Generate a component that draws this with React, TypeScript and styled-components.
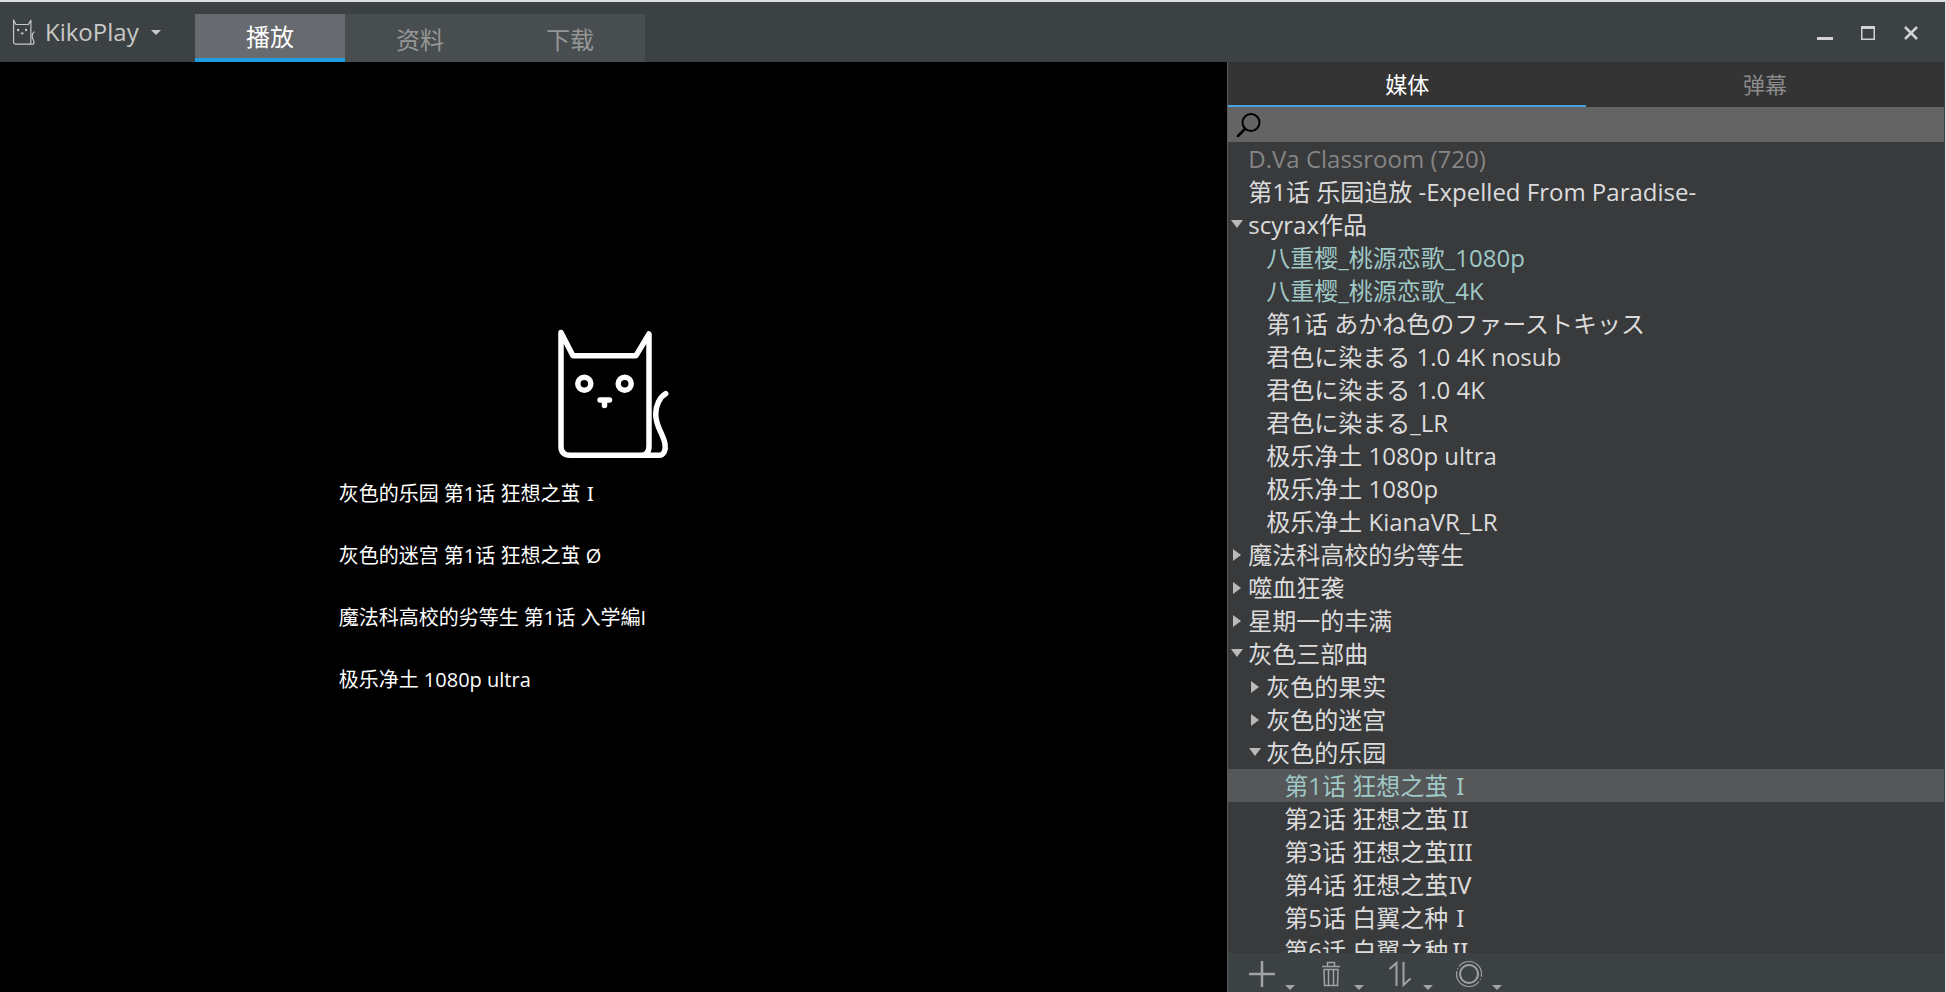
import React from 'react';
import styled, { createGlobalStyle } from 'styled-components';

const GlobalStyle = createGlobalStyle`
  *, *::before, *::after { box-sizing: border-box; }
  body { margin: 0; background: #000; }
  button { cursor: pointer; }
`;

const Window = styled.div`
  display: flex;
  flex-direction: column;
  height: 100vh;
  border-top: 2px solid #dcdfe1;
  border-right: 1px solid #dcdfe1;
  background: #000;
  color: #dcdcdc;
  font-family: "Open Sans", "Noto Sans CJK SC", sans-serif;
  font-size: 24px;
  font-weight: 400;
`;

const TitleBar = styled.header`
  display: flex;
  flex: none;
  height: 60px;
  background: #3c4143;
`;

const AppMenu = styled.button`
  display: flex;
  align-items: center;
  width: 195px;
  padding: 0 0 0 13px;
  border: 0;
  background: none;
  color: #c8c8c8;
  font: inherit;
  text-align: left;
`;

const AppName = styled.span`
  margin: 0 12px 0 10px;
  line-height: 32px;
`;

const PageTabs = styled.nav`
  display: flex;
  align-self: flex-end;
  height: 48px;
  background: #484d4f;
`;

const PageTab = styled.button<{ $active?: boolean }>`
  width: 150px;
  padding: ${(p) => (p.$active ? '2px 0 0' : '4px 0 0')};
  border: 0;
  border-bottom: ${(p) => (p.$active ? '4px solid #1f9de0' : '0')};
  background: ${(p) => (p.$active ? '#676a6e' : 'transparent')};
  color: ${(p) => (p.$active ? '#fff' : '#969696')};
  font: inherit;
  line-height: 42px;
`;

const WindowButtons = styled.div`
  display: flex;
  align-items: center;
  margin-left: auto;
  padding-right: 13px;
`;

const WindowButton = styled.button`
  display: grid;
  place-items: center;
  width: 43px;
  height: 40px;
  padding: 2px 0 0;
  border: 0;
  background: none;
  color: #d2d2d2;
`;

const Body = styled.main`
  display: flex;
  flex: 1;
  min-height: 0;
`;

const Stage = styled.section`
  display: flex;
  flex: 1;
  flex-direction: column;
  align-items: center;
  justify-content: center;
  min-width: 0;
  padding-bottom: 15px;
  color: #fff;
`;

const RecentList = styled.ul`
  width: 550px;
  margin: 4px 0 0;
  padding: 0;
  list-style: none;
`;

const RecentItem = styled.li`
  display: flex;
  align-items: center;
  height: 62px;
`;

const RecentLink = styled.a`
  color: #fff;
  font-size: 20px;
  line-height: 28px;
  text-decoration: none;
`;

const Side = styled.aside`
  display: flex;
  flex: none;
  flex-direction: column;
  width: 36.9%;
  border-left: 1px solid #5a5a5a;
  border-right: 1px solid #3c4143;
  background: #393a3c;
`;

const SideTabs = styled.div`
  display: flex;
  flex: none;
  height: 45px;
  background: #343434;
`;

const SideTab = styled.button<{ $active?: boolean }>`
  flex: 1;
  padding: 0;
  border: 0;
  border-bottom: 2px solid ${(p) => (p.$active ? '#4aa0dc' : 'transparent')};
  background: none;
  color: ${(p) => (p.$active ? '#fff' : '#8c8c8c')};
  font: inherit;
  font-size: 22px;
  line-height: 44px;
`;

const Search = styled.label`
  display: flex;
  flex: none;
  align-items: center;
  height: 35px;
  padding-left: 8px;
  background: #646464;
  color: #000;
`;

const SearchInput = styled.input`
  flex: 1;
  min-width: 0;
  padding: 0 8px;
  border: 0;
  outline: 0;
  background: none;
  color: #fff;
  font: inherit;
  font-size: 22px;
`;

const Tree = styled.ul`
  flex: 1;
  min-height: 0;
  margin: 0;
  padding: 0;
  overflow-y: auto;
  scrollbar-width: none;
  list-style: none;
`;

type Tone = 'normal' | 'dim' | 'played';
const tones: Record<Tone, string> = { normal: '#dcdcdc', dim: '#858585', played: '#9fc8c6' };

const TreeRow = styled.li<{ $depth: number; $tone: Tone; $selected?: boolean }>`
  display: flex;
  align-items: center;
  height: 33px;
  padding-left: ${(p) => p.$depth * 18}px;
  background: ${(p) => (p.$selected ? '#565758' : 'transparent')};
  color: ${(p) => tones[p.$tone]};
  line-height: 33px;
  white-space: nowrap;
`;

const Marker = styled.span`
  display: flex;
  flex: none;
  width: 20px;
  padding-left: 3px;
  color: #b9b9b9;
`;

const Numeral = styled.span`
  display: inline-block;
  width: 1em;
  font-family: "Noto Sans", sans-serif;
  text-align: center;
`;

const ToolBar = styled.footer`
  display: flex;
  flex: none;
  height: 39px;
  padding-left: 20px;
  background: #3c4143;
`;

const ToolButton = styled.button`
  display: flex;
  align-items: center;
  width: 69px;
  padding: 3px 0 0;
  border: 0;
  background: none;
  color: #a0a4a5;
`;

const ToolCaret = styled.svg`
  align-self: flex-end;
  margin: 0 0 2px 9px;
`;

const Cat = ({ size, stroke, eye }: { size: number; stroke: number; eye: number }) => (
  <svg width={size} height={Math.round((size * 130) / 112)} viewBox="0 0 112 130" fill="none" stroke="currentColor"
    strokeWidth={stroke} strokeLinecap="round" strokeLinejoin="round" aria-hidden="true">
    <path d="M83 126.3H12Q3 126.3 3 117.5V3.5L15 26.7H78L91 5V117Q91 126.3 83 126.3H101C106 126.3 108 121 107 115C105 104 97.700 98 97.700 85C97.700 76 102 68 107.700 64.700" />
    <circle cx="26.300" cy="54.700" r={eye} />
    <circle cx="66.700" cy="54.700" r={eye} />
    <path d="M42 71H51.500M46.500 71V76.500" />
  </svg>
);

const Triangle = ({ open }: { open: boolean }) => (
  <svg width="12" height="12" viewBox="0 0 12 12" fill="currentColor" aria-hidden="true">
    <path d={open ? 'M0 1H12L6 9Z' : 'M2 0L10 6L2 12Z'} />
  </svg>
);

const toolIcons: { label: string; art: React.ReactNode }[] = [
  { label: '添加', art: <path d="M1 14H27M14 1V27" strokeWidth="2.500" /> },
  {
    label: '删除',
    art: <path d="M5 6.500H23M10.500 6V2.500H17.500V6M7 9.500L7.500 25.500H20.500L21 9.500ZM11.500 10V25M16.500 10V25" strokeWidth="1.500" />,
  },
  { label: '排序', art: <path d="M3.500 9L10.500 3V26M17.500 2V25L24.500 18.500" strokeWidth="2" /> },
  {
    label: '循环模式',
    art: (
      <>
        <circle cx="14" cy="14" r="9" strokeWidth="2" />
        <circle cx="14" cy="14" r="12.500" strokeWidth="1.200" strokeDasharray="34 2 1.270 2" strokeDashoffset="-8" />
      </>
    ),
  },
];

interface Item { text: string; numeral?: string; depth?: number; tone?: Tone; open?: boolean; selected?: boolean }

const items: Item[] = [
  { text: 'D.Va Classroom (720)', tone: 'dim' },
  { text: '第1话 乐园追放 -Expelled From Paradise-' },
  { text: 'scyrax作品', open: true },
  { text: '八重樱_桃源恋歌_1080p', depth: 1, tone: 'played' },
  { text: '八重樱_桃源恋歌_4K', depth: 1, tone: 'played' },
  { text: '第1话 あかね色のファーストキッス', depth: 1 },
  { text: '君色に染まる 1.0 4K nosub', depth: 1 },
  { text: '君色に染まる 1.0 4K', depth: 1 },
  { text: '君色に染まる_LR', depth: 1 },
  { text: '极乐净土 1080p ultra', depth: 1 },
  { text: '极乐净土 1080p', depth: 1 },
  { text: '极乐净土 KianaVR_LR', depth: 1 },
  { text: '魔法科高校的劣等生', open: false },
  { text: '噬血狂袭', open: false },
  { text: '星期一的丰满', open: false },
  { text: '灰色三部曲', open: true },
  { text: '灰色的果实', depth: 1, open: false },
  { text: '灰色的迷宫', depth: 1, open: false },
  { text: '灰色的乐园', depth: 1, open: true },
  { text: '第1话 狂想之茧', numeral: 'I', depth: 2, tone: 'played', selected: true },
  { text: '第2话 狂想之茧', numeral: 'II', depth: 2 },
  { text: '第3话 狂想之茧', numeral: 'III', depth: 2 },
  { text: '第4话 狂想之茧', numeral: 'IV', depth: 2 },
  { text: '第5话 白翼之种', numeral: 'I', depth: 2 },
  { text: '第6话 白翼之种', numeral: 'II', depth: 2 },
];

const recent: Item[] = [
  { text: '灰色的乐园 第1话 狂想之茧', numeral: 'I' },
  { text: '灰色的迷宫 第1话 狂想之茧 Ø' },
  { text: '魔法科高校的劣等生 第1话 入学編I' },
  { text: '极乐净土 1080p ultra' },
];

const Title = ({ item }: { item: Item }) => (
  <span>{item.text}{item.numeral && <Numeral>{item.numeral}</Numeral>}</span>
);

const caretPath = <path d="M0 0H10L5 5Z" />;

export default function App() {
  return (
    <Window>
      <GlobalStyle />
      <TitleBar>
        <AppMenu>
          <Cat size={22} stroke={6} eye={3} />
          <AppName>KikoPlay</AppName>
          <svg width="10" height="5" viewBox="0 0 10 5" fill="currentColor" aria-hidden="true">{caretPath}</svg>
        </AppMenu>
        <PageTabs>
          <PageTab $active>播放</PageTab>
          <PageTab>资料</PageTab>
          <PageTab>下载</PageTab>
        </PageTabs>
        <WindowButtons>
          <WindowButton aria-label="最小化">
            <svg width="16" height="16" viewBox="0 0 16 16" fill="currentColor"><path d="M0 12H16V15H0Z" /></svg>
          </WindowButton>
          <WindowButton aria-label="最大化">
            <svg width="14" height="14" viewBox="0 0 14 14" fill="currentColor" fillRule="evenodd"><path d="M0 0H14V14H0ZM1.500 3V12.500H12.500V3Z" /></svg>
          </WindowButton>
          <WindowButton aria-label="关闭">
            <svg width="14" height="14" viewBox="0 0 14 14" stroke="currentColor" strokeWidth="2.500"><path d="M1 1L13 13M13 1L1 13" /></svg>
          </WindowButton>
        </WindowButtons>
      </TitleBar>
      <Body>
        <Stage>
          <Cat size={112} stroke={5.5} eye={6.5} />
          <RecentList>
            {recent.map((r) => (
              <RecentItem key={r.text}><RecentLink href="#"><Title item={r} /></RecentLink></RecentItem>
            ))}
          </RecentList>
        </Stage>
        <Side>
          <SideTabs>
            <SideTab $active>媒体</SideTab>
            <SideTab>弹幕</SideTab>
          </SideTabs>
          <Search>
            <svg width="26" height="26" viewBox="0 0 26 26" fill="none" stroke="currentColor" strokeWidth="2" strokeLinecap="round" aria-hidden="true">
              <circle cx="15" cy="10.500" r="8.500" />
              <path d="M9 17L2 24" strokeWidth="2.500" />
            </svg>
            <SearchInput aria-label="搜索" />
          </Search>
          <Tree>
            {items.map((i) => (
              <TreeRow key={i.text} $depth={i.depth ?? 0} $tone={i.tone ?? 'normal'} $selected={i.selected}>
                <Marker>{i.open !== undefined && <Triangle open={i.open} />}</Marker>
                <Title item={i} />
              </TreeRow>
            ))}
          </Tree>
          <ToolBar>
            {toolIcons.map((t) => (
              <ToolButton key={t.label} aria-label={t.label}>
                <svg width="28" height="28" viewBox="0 0 28 28" fill="none" stroke="currentColor">{t.art}</svg>
                <ToolCaret width="10" height="5" viewBox="0 0 10 5" fill="currentColor">{caretPath}</ToolCaret>
              </ToolButton>
            ))}
          </ToolBar>
        </Side>
      </Body>
    </Window>
  );
}
